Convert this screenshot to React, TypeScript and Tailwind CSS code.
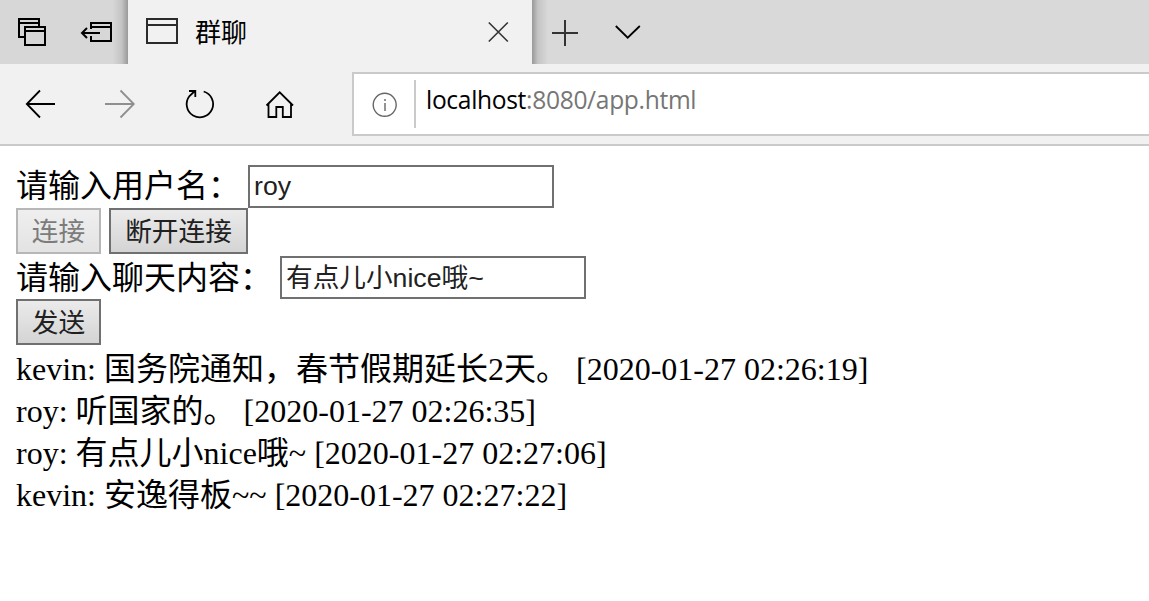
import React from "react";

type Message = { user: string; text: string; time: string };

const messages: Message[] = [
  { user: "kevin", text: "国务院通知，春节假期延长2天。", time: "2020-01-27 02:26:19" },
  { user: "roy", text: "听国家的。", time: "2020-01-27 02:26:35" },
  { user: "roy", text: "有点儿小nice哦~", time: "2020-01-27 02:27:06" },
  { user: "kevin", text: "安逸得板~~", time: "2020-01-27 02:27:22" },
];

const inputClass =
  "h-[43px] w-[306px] shrink-0 border-2 border-[#707070] bg-white text-[26.67px] text-[#212121] outline-none font-['Liberation_Sans','Noto_Sans_CJK_SC',sans-serif]";
const buttonClass =
  "h-[46px] shrink-0 whitespace-nowrap border-2 border-[#707070] bg-linear-to-b from-[#ebebeb] to-[#d4d4d4] pt-[3px] text-[26.67px] leading-[39px] text-[#212121] disabled:border-[#b7b7b7] disabled:from-[#efefef] disabled:to-[#e3e3e3] disabled:text-[#7c7c7c] font-['Liberation_Sans','Noto_Sans_CJK_SC',sans-serif]";

function TabStrip() {
  return (
    <div className="flex h-16 bg-[#d9d9d9]">
      <div className="w-32 shrink-0 bg-linear-to-r from-[#d7d7d7] from-88% via-[#c4c4c4] via-95% to-[#999999]">
        <svg width="128" height="64" fill="none" stroke="#000" strokeWidth="2">
          <path d="M24 37H19V19H39V26M19 23H39" />
          <path d="M25 27H45V45H25ZM25 31H45" />
          <path d="M91 29V23H111V41H91V36M91 27H111M82 33H100M87 28L82 33L87 38" />
        </svg>
      </div>
      <div className="flex w-[404px] shrink-0 items-start bg-[#f1f1f1]">
        <svg width="64" height="64" fill="none" stroke="#2b2b2b" strokeWidth="2" className="shrink-0">
          <path d="M19 19H49V43H19ZM19 25H49" />
        </svg>
        <span className="ml-[3px] w-[285px] text-[26px] leading-[61px] font-['Noto_Sans_CJK_SC',sans-serif]">群聊</span>
        <svg width="52" height="64" fill="none" stroke="#333" strokeWidth="1.6">
          <path d="M8.8 22.5L27.8 41.5M27.8 22.5L8.8 41.5" />
        </svg>
      </div>
      <div className="flex grow bg-linear-to-r from-[#999999] via-[#c4c4c4] via-[6px] to-[#d9d9d9] to-[16px]">
        <svg width="130" height="64" fill="none" strokeWidth="2">
          <path d="M20 33H46M33 20V46" stroke="#333" />
          <path d="M83.8 26L95.7 37.7L107.8 26" stroke="#000" strokeWidth="1.8" />
        </svg>
      </div>
    </div>
  );
}

function Toolbar() {
  return (
    <div className="flex h-[82px] items-start border-b-2 border-[#cacaca] bg-[#f1f1f1]">
      <svg width="352" height="80" fill="none" stroke="#000" strokeWidth="1.8" className="shrink-0">
        <path d="M27 40H55M40 26.5L26.8 40L40 53.5" />
        <path d="M105 40H133.5M120.5 26.5L133.8 40L120.5 53.5" stroke="#8f8f8f" />
        <path d="M203.7 27.5A13.2 13.2 0 1 1 189.5 32L194.8 27M189 27H195.3V33" strokeWidth="1.8" />
        <path d="M266.5 41.5L279.7 28.3L293 41.5M268.5 40V53H276.3V43H282.8V53H291V40" />
      </svg>
      <div className="mt-2 flex h-16 grow items-start border-2 border-r-0 border-[#cacaca] bg-white">
        <svg width="60" height="60" fill="none" stroke="#666" strokeWidth="1.4" className="shrink-0">
          <circle cx="30.7" cy="30.8" r="11.5" />
          <path d="M31 29V37M31 25V27" />
        </svg>
        <div className="mt-1.5 h-12 w-[2px] shrink-0 bg-[#cacaca]" />
        <span className="ml-[10px] whitespace-nowrap text-[24.6px] leading-[52px] tracking-[-0.33px] text-[#767676] font-['Open_Sans',sans-serif]">
          <span className="text-black">localhost</span>:8080/app.html
        </span>
      </div>
    </div>
  );
}

export default function App() {
  return (
    <div className="h-[601px] w-full overflow-hidden bg-white text-black">
      <TabStrip />
      <Toolbar />
      <main className="pt-[19px] pl-4 text-[32px] font-['Liberation_Serif','Noto_Sans_CJK_SC',serif]">
        <div className="flex h-[43px]">
          <label htmlFor="user" className="w-[232px] shrink-0 whitespace-nowrap leading-[42px]">请输入用户名：</label>
          <input id="user" className={inputClass + " pb-[1px] pl-1"} defaultValue="roy" />
        </div>
        <div className="flex h-[48px] gap-2">
          <button disabled className={buttonClass + " w-[85px]"}>连接</button>
          <button className={buttonClass + " w-[139px]"}>断开连接</button>
        </div>
        <div className="flex h-[43px]">
          <label htmlFor="content" className="w-[264px] shrink-0 whitespace-nowrap leading-[44px]">请输入聊天内容：</label>
          <input id="content" className={inputClass + " pb-[5px] pl-[4px]"} defaultValue="有点儿小nice哦~" />
        </div>
        <div className="flex h-[49px]">
          <button className={buttonClass + " w-[85px]"}>发送</button>
        </div>
        {messages.map((m) => (
          <p key={m.time} className="h-[42px] whitespace-nowrap leading-[42px]">
            {m.user}: {m.text} [{m.time}]
          </p>
        ))}
      </main>
    </div>
  );
}
